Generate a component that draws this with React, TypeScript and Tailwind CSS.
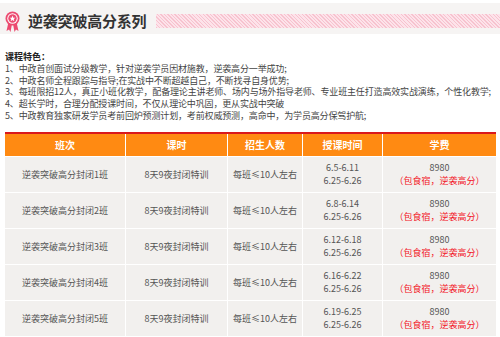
import React from "react";

const rows = [
  { name: "逆袭突破高分封闭1班", d1: "6.5-6.11" },
  { name: "逆袭突破高分封闭2班", d1: "6.8-6.14" },
  { name: "逆袭突破高分封闭3班", d1: "6.12-6.18" },
  { name: "逆袭突破高分封闭4班", d1: "6.16-6.22" },
  { name: "逆袭突破高分封闭5班", d1: "6.19-6.25" },
];

const lines = [
  "1、中政首创面试分级教学，针对逆袭学员因材施教，逆袭高分一举成功;",
  "2、中政名师全程跟踪与指导;在实战中不断超越自己，不断找寻自身优势;",
  "3、每班限招12人，真正小班化教学，配备理论主讲老师、场内与场外指导老师、专业班主任打造高效实战演练，个性化教学;",
  "4、超长学时，合理分配授课时间，不仅从理论中巩固，更从实战中突破",
  "5、中政教育独家研发学员考前回炉预测计划，考前权威预测，高命中，为学员高分保驾护航;",
];

function Rosette() {
  return (
    <svg width="15" height="22" viewBox="0 0 15 22">
      <path d="M3.5 11 L1.5 20 L4 18.5 L5.5 21 L7 13 Z" fill="#ec4b70" />
      <path d="M11.5 11 L13.5 20 L11 18.5 L9.5 21 L8 13 Z" fill="#ec4b70" />
      <circle cx="7.5" cy="7.5" r="7" fill="#ec4b70" />
      <circle cx="7.5" cy="7.5" r="5.2" fill="#fff" />
      <circle cx="7.5" cy="7.5" r="4.2" fill="#ec4b70" />
      <path
        d="M7.5 4.6 L8.3 6.7 L10.4 6.8 L8.8 8.1 L9.3 10.2 L7.5 9 L5.7 10.2 L6.2 8.1 L4.6 6.8 L6.7 6.7 Z"
        fill="#fff"
      />
    </svg>
  );
}

export default function App() {
  return (
    <div
      className="w-[500px] h-[337px] overflow-hidden bg-white pt-[3px]"
      style={{ fontFamily: '"Noto Sans CJK SC", "Liberation Sans", sans-serif' }}
    >
      <div className="h-[31px] bg-[#f6f4f3] flex items-center">
        <div className="pl-[5px] pt-[6px]">
          <Rosette />
        </div>
        <div className="ml-[8px] text-[15px] font-bold text-[#333] leading-none tracking-[-0.2px] mt-[4px]">
          逆袭突破高分系列
        </div>
        <div className="ml-[10px] flex-1 h-[14px] mt-[4px] bg-[repeating-linear-gradient(45deg,#f7c3cf_0px,#f7c3cf_1px,#fde3ea_1px,#fde3ea_2.5px)]" />
      </div>

      <div className="mt-[17px] pl-[5px] text-[9px] leading-[11.8px] text-[#444]">
        <div className="font-bold text-[#222]">课程特色：</div>
        {lines.map((l) => (
          <div key={l} className="whitespace-nowrap tracking-[-0.15px]">
            {l}
          </div>
        ))}
      </div>

      <div className="mt-[10px] ml-[5px] w-[491px] border-t-2 border-[#d9191c]">
        <div className="grid grid-cols-[120px_101px_74px_79px_113px] gap-px bg-white">
          {["班次", "课时", "招生人数", "授课时间", "学费"].map((h) => (
            <div
              key={h}
              className="h-[22px] bg-[#ff8a12] text-white text-[10px] font-bold flex items-center justify-center"
            >
              {h}
            </div>
          ))}
          {rows.map((r) => (
            <React.Fragment key={r.name}>
              <div className="h-[35px] bg-[#f2f0ee] text-[9px] text-[#555] flex items-center justify-center">
                {r.name}
              </div>
              <div className="h-[35px] bg-[#f2f0ee] text-[9px] text-[#555] flex items-center justify-center">
                8天9夜封闭特训
              </div>
              <div className="h-[35px] bg-[#f2f0ee] text-[9px] text-[#555] flex items-center justify-center">
                每班≤10人左右
              </div>
              <div className="h-[35px] bg-[#f2f0ee] text-[9px] text-[#555] flex flex-col items-center justify-center leading-[13px]">
                <div>{r.d1}</div>
                <div>6.25-6.26</div>
              </div>
              <div className="h-[35px] bg-[#f2f0ee] text-[9px] text-[#555] flex flex-col items-center justify-center leading-[13px]">
                <div>8980</div>
                <div className="text-[#f2141e]">（包食宿，逆袭高分）</div>
              </div>
            </React.Fragment>
          ))}
        </div>
      </div>
    </div>
  );
}
